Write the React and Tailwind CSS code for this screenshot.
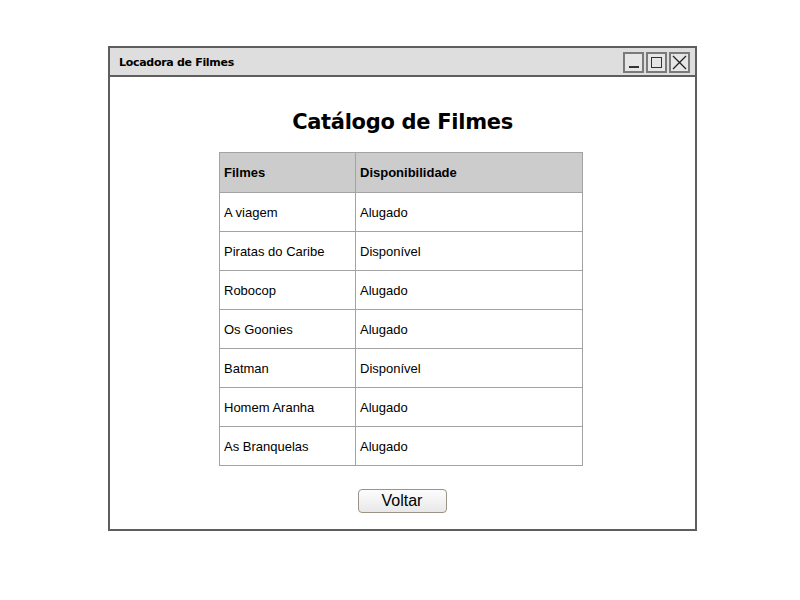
const FILMES = [
  { nome: "A viagem", status: "Alugado" },
  { nome: "Piratas do Caribe", status: "Disponível" },
  { nome: "Robocop", status: "Alugado" },
  { nome: "Os Goonies", status: "Alugado" },
  { nome: "Batman", status: "Disponível" },
  { nome: "Homem Aranha", status: "Alugado" },
  { nome: "As Branquelas", status: "Alugado" },
];

function WinButton({ children }) {
  return (
    <div className="w-[21px] h-[21px] border-2 border-[#7a7a7a] bg-[#e6e6e6] flex items-center justify-center">
      {children}
    </div>
  );
}

export default function App() {
  return (
    <div className="w-[800px] h-[600px] bg-white pt-[46px] pl-[108px] font-['Liberation_Sans',Arial,sans-serif]">
      <div className="w-[589px] h-[485px] border-2 border-[#5e5e5e] flex flex-col">
        {/* title bar */}
        <div className="h-[29px] bg-[#dedede] border-b-2 border-[#5e5e5e] flex items-center justify-between pl-[9px] pr-[5px]">
          <span className="mt-[4px] text-[11px] font-bold text-black font-['DejaVu_Sans',sans-serif] tracking-[-0.3px]">
            Locadora de Filmes
          </span>
          <div className="flex gap-[2px] mt-[2px]">
            <WinButton>
              <div className="w-[10px] h-[2px] bg-[#333] mt-[9px]" />
            </WinButton>
            <WinButton>
              <div className="w-[11px] h-[11px] border-[1.5px] border-[#333]" />
            </WinButton>
            <WinButton>
              <svg width="15" height="15" viewBox="0 0 15 15">
                <path d="M1 1L14 14M14 1L1 14" stroke="#222" strokeWidth="1.3" />
              </svg>
            </WinButton>
          </div>
        </div>

        {/* content */}
        <div className="flex flex-col items-center">
          <h1 className="mt-[30px] text-[21px] font-bold text-black font-['DejaVu_Sans',sans-serif] leading-[30px] tracking-[-0.3px]">
            Catálogo de Filmes
          </h1>
          <table className="mt-[15px] -ml-[3px] border-collapse text-[13px] text-black">
            <thead>
              <tr className="h-[40px] bg-[#cccccc]">
                <th className="w-[136px] border border-[#a3a3a3] text-left font-bold pl-[4px]">Filmes</th>
                <th className="w-[227px] border border-[#a3a3a3] text-left font-bold pl-[4px]">Disponibilidade</th>
              </tr>
            </thead>
            <tbody>
              {FILMES.map((f) => (
                <tr key={f.nome} className="h-[39px]">
                  <td className="border border-[#a3a3a3] pl-[4px] pt-[1px]">{f.nome}</td>
                  <td className="border border-[#a3a3a3] pl-[4px] pt-[1px]">{f.status}</td>
                </tr>
              ))}
            </tbody>
          </table>
          <button className="mt-[23px] -ml-[1px] w-[89px] h-[24px] rounded-[4px] border border-[#9c9286] bg-gradient-to-b from-[#fdfdfd] to-[#e8e8e8] text-[16px] text-black leading-none">
            Voltar
          </button>
        </div>
      </div>
    </div>
  );
}
